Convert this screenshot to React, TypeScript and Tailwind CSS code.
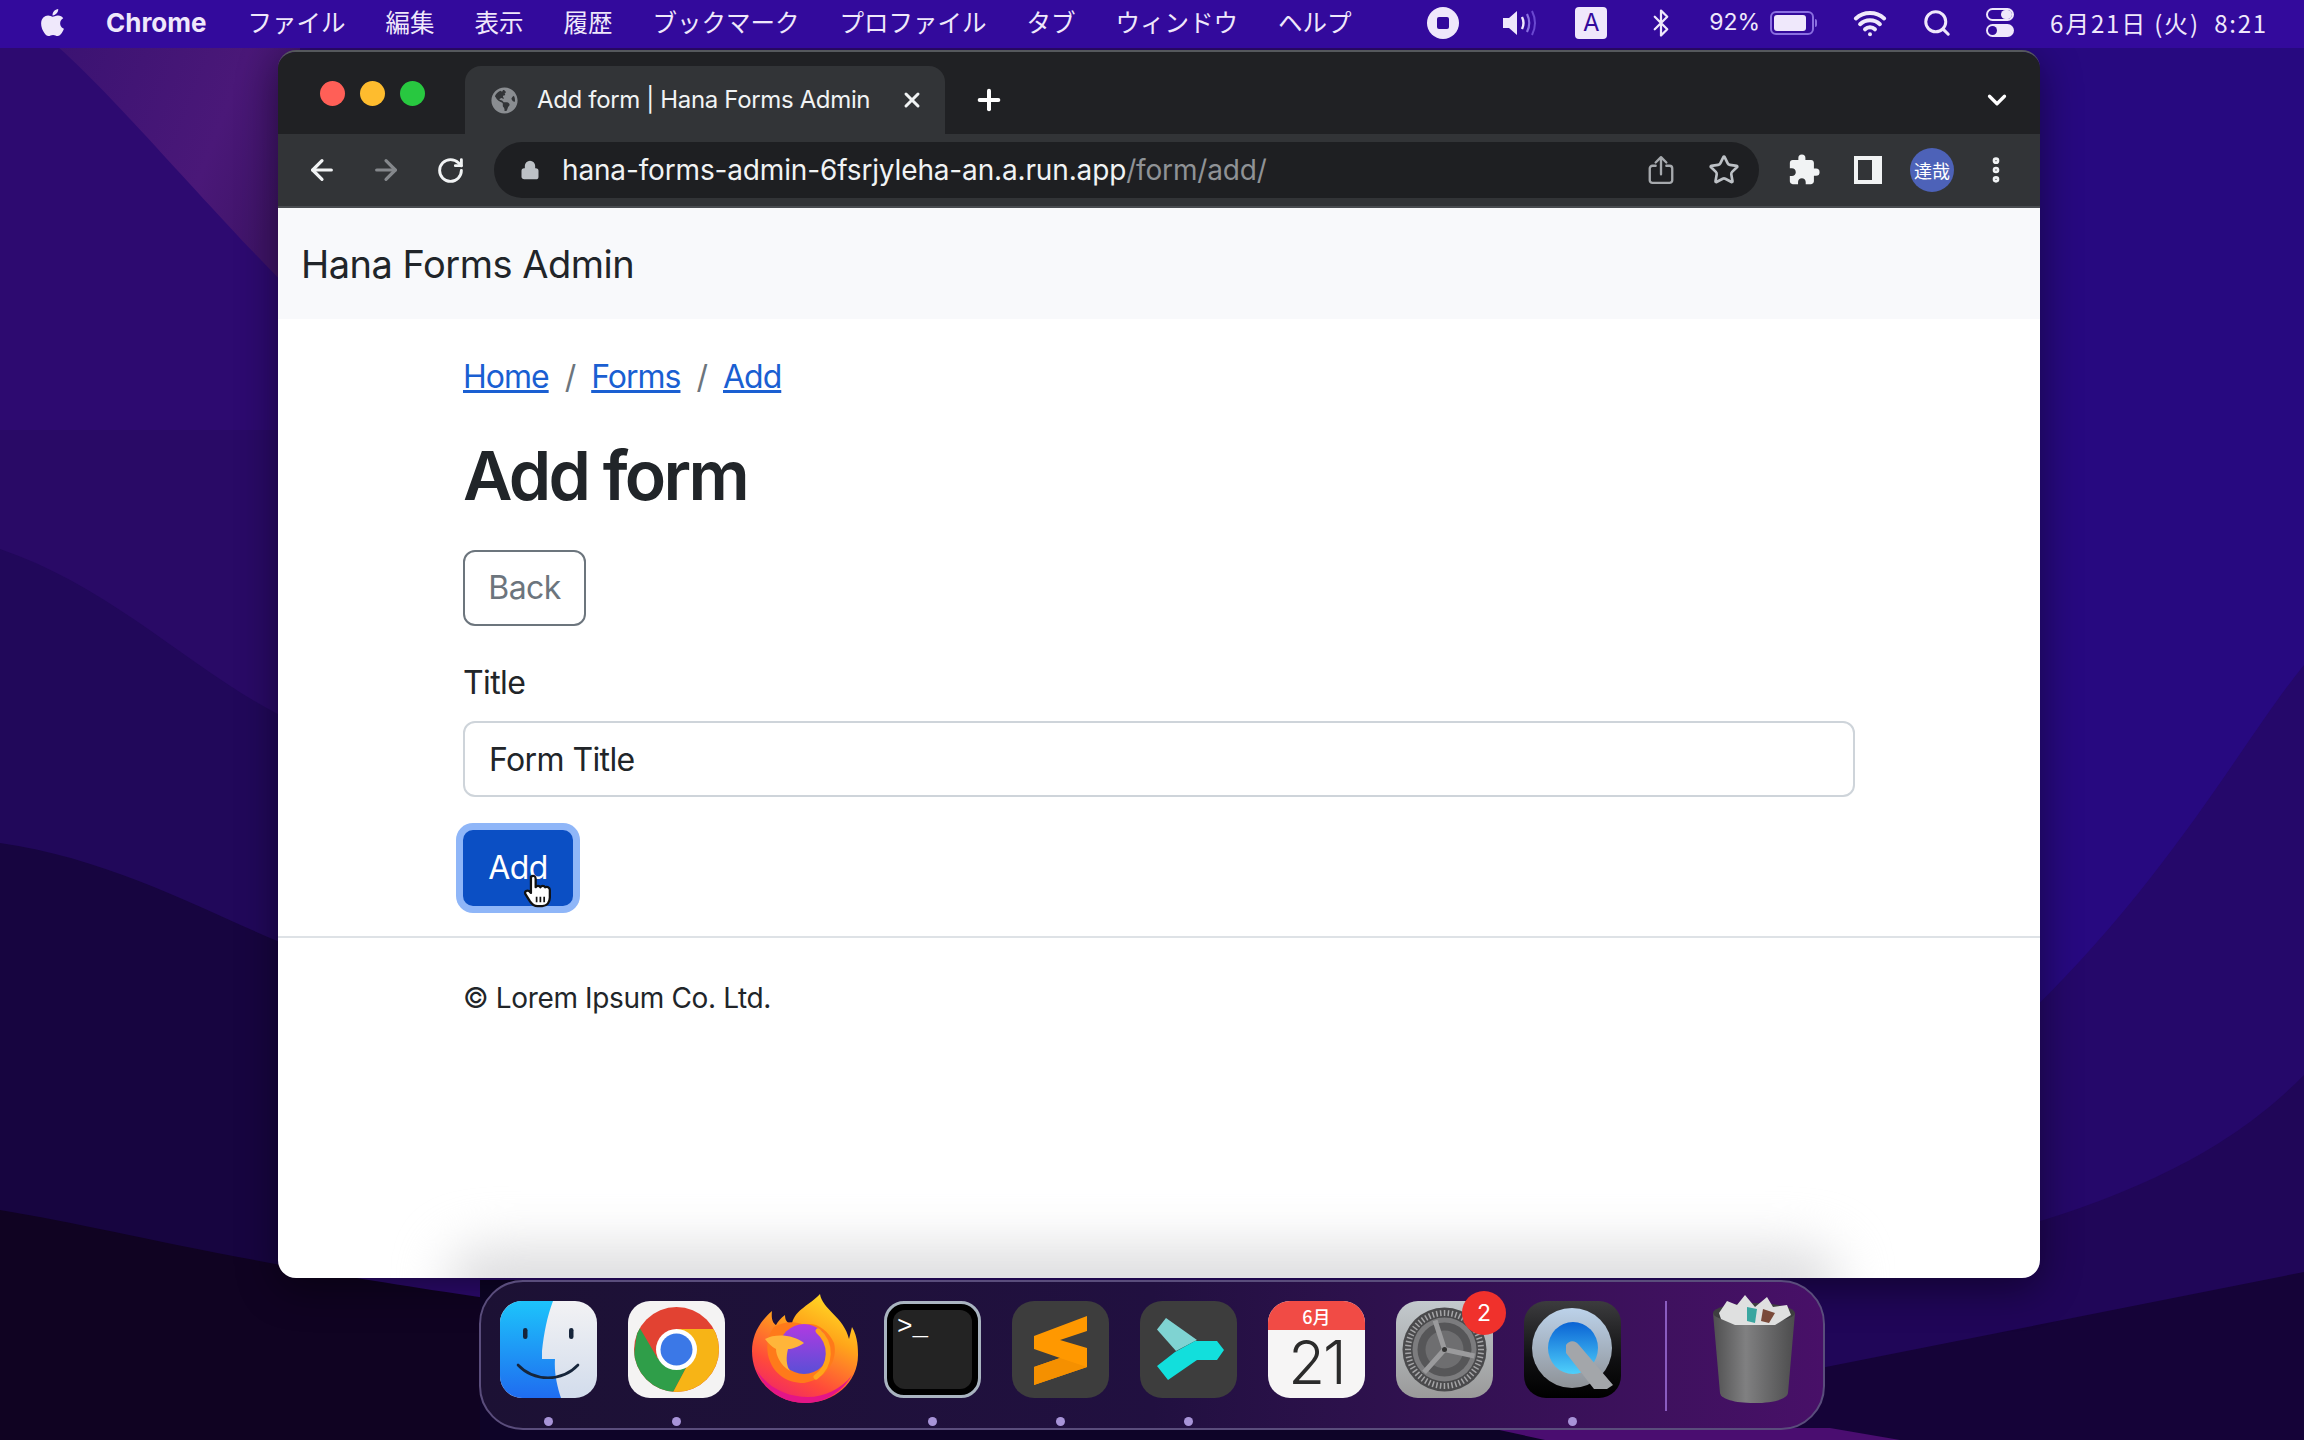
import { ArrowLeft, ArrowRight, ChevronDown, Lock, Plus, RotateCw, Search, Star, Wifi, X, Bluetooth, MoreVertical } from "lucide-react";
import { FaApple, FaGlobeAmericas } from "react-icons/fa";
import { MdExtension } from "react-icons/md";

const menus = ["ファイル", "編集", "表示", "履歴", "ブックマーク", "プロファイル", "タブ", "ウィンドウ", "ヘルプ"];

function Wallpaper() {
  return (
    <svg className="absolute inset-0 h-full w-full" viewBox="0 0 2304 1440" preserveAspectRatio="none">
      <defs>
        <linearGradient id="wpTop" x1="0" y1="0" x2="1" y2="0.4">
          <stop offset="0" stopColor="#3a1272" />
          <stop offset="0.7" stopColor="#4a1878" />
          <stop offset="1" stopColor="#3f1468" />
        </linearGradient>
      </defs>
      <rect width="2304" height="1440" fill="#2d0a70" />
      <path d="M50 40 C110 90 200 200 300 300 V40Z" fill="url(#wpTop)" />
      <path d="M0 430 H300 V1000 H0Z" fill="#290a66" />
      <path d="M0 549 C120 590 200 680 300 725 V1000 H0Z" fill="#21085a" />
      <path d="M0 843 C120 860 220 920 300 950 V1300 H0Z" fill="#170540" />
      <path d="M0 1210 C120 1230 220 1260 500 1300 V1440 H0Z" fill="#100322" />
      <rect x="1700" y="40" width="604" height="1340" fill="#270980" />
      <path d="M1700 1240 C2080 1060 2210 780 2304 665 V1400 H1700Z" fill="#25086a" />
      <path d="M1700 1290 C2080 1240 2220 1160 2304 1075 V1400 H1700Z" fill="#200658" />
      <path d="M1700 1392 L2304 1272 V1440 H1700Z" fill="#150338" />
      <path d="M480 1280 H1700 V1440 H480Z" fill="#0e0428" />
      <path d="M1490 1428 H1830 L1900 1440 H1545Z" fill="#4a0d70" />
    </svg>
  );
}

function MenuBar() {
  return (
    <div className="relative flex h-12 items-center bg-[#330a9c] pb-[3px] pl-[37px] pr-[36px] text-[24.5px] text-[#efe8fb] [font-family:'Noto_Sans_CJK_JP',sans-serif]">
      <FaApple className="h-[31px] w-[31px]" />
      <span className="ml-[38px] text-[26px] font-bold [font-family:'Inter',sans-serif]">Chrome</span>
      <div className="ml-[41px] flex gap-[40px]">
        {menus.map((m) => (
          <span key={m} className="whitespace-nowrap">{m}</span>
        ))}
      </div>
      <div className="ml-auto flex items-center">
        <div className="flex h-8 w-8 items-center justify-center rounded-full bg-[#efe8fb]">
          <div className="h-3 w-3 rounded-[2px] bg-[#330a9c]" />
        </div>
        <svg className="ml-[42px] h-8 w-[36px]" viewBox="0 0 36 32" fill="none">
          <path d="M2 11h6l8-7v24l-8-7H2z" fill="#efe8fb" />
          <path d="M21 10c2 4 2 8 0 12" stroke="#efe8fb" strokeWidth="2.4" />
          <path d="M26 7c3 6 3 12 0 18" stroke="#8a6fe0" strokeWidth="2.2" />
          <path d="M31 4c4 8 4 16 0 24" stroke="#6a48d0" strokeWidth="2" />
        </svg>
        <div className="ml-[38px] flex h-8 w-8 items-center justify-center rounded-[4px] bg-[#efe8fb] text-[24px] leading-none text-[#330a9c] [font-family:'Inter',sans-serif]">A</div>
        <Bluetooth className="ml-[39px] h-[30px] w-[30px]" strokeWidth={1.8} />
        <span className="ml-[33px] text-[23px] [font-family:'Inter',sans-serif]">92%</span>
        <div className="ml-[10px] flex items-center">
          <div className="h-[24px] w-[44px] rounded-[6px] border-2 border-[#8a6fe0] p-[2px]">
            <div className="h-full w-[88%] rounded-[3px] bg-[#efe8fb]" />
          </div>
          <div className="ml-[1px] h-2 w-[2px] rounded-r bg-[#8a6fe0]" />
        </div>
        <Wifi className="ml-[36px] h-[34px] w-[34px]" strokeWidth={2.8} />
        <Search className="ml-[35px] h-[30px] w-[30px]" strokeWidth={2.4} />
        <div className="ml-[34px] flex flex-col gap-[3px]">
          <div className="h-[13px] w-[28px] rounded-full border-2 border-[#efe8fb] pl-[13px]"><div className="h-full w-full rounded-full bg-[#efe8fb]" /></div>
          <div className="h-[13px] w-[28px] rounded-full bg-[#efe8fb] pl-[2px] pt-[2px]"><div className="h-[9px] w-[9px] rounded-full bg-[#330a9c]" /></div>
        </div>
        <span className="ml-[36px] whitespace-nowrap text-[24px] tracking-[1.8px]">6月21日 (火)&nbsp; 8:21</span>
      </div>
    </div>
  );
}

function TabStrip() {
  return (
    <div className="flex h-[82px] shrink-0 items-end bg-[#202124] pl-[42px]">
      <div className="mb-[28px] flex gap-[15px]">
        <div className="h-[25px] w-[25px] rounded-full bg-[#ff5f57]" />
        <div className="h-[25px] w-[25px] rounded-full bg-[#febc2e]" />
        <div className="h-[25px] w-[25px] rounded-full bg-[#28c840]" />
      </div>
      <div className="relative ml-[40px] flex h-[68px] w-[480px] items-center rounded-t-[16px] bg-[#323437] pl-[26px] text-[24px] tracking-[-0.35px] text-[#f1f3f4] [font-family:'Inter',sans-serif]">
        <FaGlobeAmericas className="h-[27px] w-[27px] text-[#8a8d91]" />
        <span className="ml-[19px] whitespace-nowrap">Add form | Hana Forms Admin</span>
        <X className="absolute right-[21px] h-[24px] w-[24px]" strokeWidth={3} />
      </div>
      <div className="mb-[14px] ml-[24px] flex h-10 w-10 items-center justify-center">
        <Plus className="h-[32px] w-[32px] text-white" strokeWidth={3} />
      </div>
      <div className="mb-[14px] ml-auto mr-[23px] flex h-10 w-10 items-center justify-center">
        <ChevronDown className="h-[30px] w-[30px] text-white" strokeWidth={2.6} />
      </div>
    </div>
  );
}

function ToolBar() {
  return (
    <div className="flex h-[74px] shrink-0 items-start border-b-2 border-[#494c50] bg-[#323437] pl-3 pt-2 [font-family:'Inter',sans-serif]">
      <div className="flex h-14 w-16 items-center justify-center"><ArrowLeft className="h-[32px] w-[32px] text-[#f1f3f4]" strokeWidth={2.4} /></div>
      <div className="flex h-14 w-16 items-center justify-center"><ArrowRight className="h-[32px] w-[32px] text-[#85888c]" strokeWidth={2.4} /></div>
      <div className="flex h-14 w-16 items-center justify-center"><RotateCw className="h-[29px] w-[29px] text-[#f1f3f4]" strokeWidth={2.4} /></div>
      <div className="ml-3 flex h-14 w-[1265px] items-center rounded-full bg-[#1e1f22] pl-[26px] pr-[19px] text-[28px] tracking-[-0.15px]">
        <Lock className="h-[22px] w-[20px] fill-[#bdc1c6] text-[#bdc1c6]" strokeWidth={2.4} />
        <span className="ml-[22px] whitespace-nowrap text-[#f1f3f4]">hana-forms-admin-6fsrjyleha-an.a.run.app</span>
        <span className="whitespace-nowrap text-[#8f9296]">/form/add/</span>
        <svg className="ml-auto h-[30px] w-[26px]" viewBox="0 0 24 28" fill="none" stroke="#a6a9ad" strokeWidth="2.2" strokeLinecap="round" strokeLinejoin="round">
          <path d="M7 10H4a2.5 2.5 0 0 0-2.5 2.5v11A2.5 2.5 0 0 0 4 26h16a2.5 2.5 0 0 0 2.5-2.5v-11A2.5 2.5 0 0 0 20 10h-3" />
          <path d="M12 18V2M7 7l5-5 5 5" />
        </svg>
        <Star className="ml-[34px] h-[32px] w-[32px] text-[#bdc1c6]" strokeWidth={2} />
      </div>
      <div className="ml-[13px] flex h-14 w-16 items-center justify-center"><MdExtension className="h-[34px] w-[34px] text-[#f1f3f4]" /></div>
      <div className="flex h-14 w-16 items-center justify-center">
        <div className="flex h-[28px] w-[28px] bg-[#f1f3f4] py-[4px] pl-[4px] pr-[10px]"><div className="h-full w-full bg-[#323437]" /></div>
      </div>
      <div className="flex h-14 w-16 items-center justify-center">
        <div className="flex h-[44px] w-[44px] items-center justify-center rounded-full bg-[#4d62b8] text-[18px] leading-none text-white [font-family:'Noto_Sans_CJK_JP',sans-serif]">達哉</div>
      </div>
      <div className="flex h-14 w-16 items-center justify-center"><MoreVertical className="h-[32px] w-[32px] text-[#f1f3f4]" strokeWidth={3} /></div>
    </div>
  );
}

function HandCursor() {
  return (
    <svg className="absolute left-[60px] top-[44px] h-[34px] w-[31px]" viewBox="0 0 32 36">
      <path d="M8 3c2-2 5-1 5 2v9c1-2 4-2 5 0 1-2 4-2 5 0 2-1 5 0 5 3v8c0 5-3 9-8 9h-5c-4 0-6-2-8-5l-5-8c-1-3 2-4 4-3l2 2z" fill="#fff" stroke="#111" strokeWidth="2.4" strokeLinejoin="round" />
      <path d="M14 24v6M18 24v6M22 24v6" stroke="#111" strokeWidth="1.8" />
    </svg>
  );
}

function Page() {
  return (
    <div className="relative flex-1 overflow-hidden bg-white text-[32px] tracking-[-0.6px] text-[#212529] [font-family:'Inter',sans-serif]">
      <div className="flex h-[111px] items-center bg-[#f8f9fb] pl-[23px] pt-[2px] text-[38px] tracking-[-0.5px]">Hana Forms Admin</div>
      <div className="ml-[185px] w-[1392px]">
        <div className="mt-[38px] flex h-[40px] items-center text-[32px] leading-none tracking-[-1px]">
          <a className="text-[#1a5fd2] underline">Home</a>
          <span className="mx-[16px] text-[#6c757d]">/</span>
          <a className="text-[#1a5fd2] underline">Forms</a>
          <span className="mx-[16px] text-[#6c757d]">/</span>
          <a className="text-[#1a5fd2] underline">Add</a>
        </div>
        <h1 className="mt-[33px] h-[90px] text-[68px] font-semibold leading-[90px] tracking-[-2.7px]">Add form</h1>
        <div className="mt-[30px] flex h-[76px] w-[123px] items-center justify-center rounded-[12px] border-2 border-[#6c757d] text-[#6c757d]">Back</div>
        <div className="mt-[33px] h-[48px] leading-[48px]">Title</div>
        <input readOnly value="Form Title" className="mt-[14px] block h-[76px] w-full rounded-[12px] border-2 border-[#ced4da] px-6 text-[32px] tracking-[-0.6px] text-[#212529] outline-none" />
        <div className="relative mt-[33px] flex h-[76px] w-[110px] items-center justify-center rounded-[10px] bg-[#0b4fc4] text-white shadow-[0_0_0_7px_#8fb6f8]">
          Add
          <HandCursor />
        </div>
      </div>
      <div className="mt-[30px] h-[2px] bg-[#dee2e6]" />
      <div className="ml-[185px] mt-[40px] text-[28px] leading-[40px] tracking-[-0.35px]">© Lorem Ipsum Co. Ltd.</div>
      <div className="absolute bottom-[-40px] left-[170px] h-[70px] w-[1390px] rounded-full bg-[#dcdcde] blur-[26px]" />
    </div>
  );
}

function Finder() {
  return (
    <svg viewBox="0 0 97 97" className="h-full w-full">
      <defs>
        <linearGradient id="fb" x1="0" y1="0" x2="0" y2="1"><stop offset="0" stopColor="#1dc4fb" /><stop offset="1" stopColor="#1f6cf0" /></linearGradient>
        <linearGradient id="fg" x1="0" y1="0" x2="0" y2="1"><stop offset="0" stopColor="#f2f2f4" /><stop offset="1" stopColor="#d2dcec" /></linearGradient>
      </defs>
      <rect width="97" height="97" rx="22" fill="url(#fg)" />
      <path d="M22 0h31c-6 16-9 32-11 50v8h13c-1 13 2 27 6 39H22C10 97 0 87 0 75V22C0 10 10 0 22 0z" fill="url(#fb)" />
      <path d="M18 64c16 17 44 17 60 0" fill="none" stroke="#16253b" strokeWidth="2.6" strokeLinecap="round" />
      <rect x="23" y="27" width="4.5" height="11" rx="2.2" fill="#16253b" />
      <rect x="69" y="27" width="4.5" height="11" rx="2.2" fill="#16253b" />
    </svg>
  );
}

function Chrome() {
  return (
    <svg viewBox="0 0 97 97" className="h-full w-full">
      <defs>
        <clipPath id="chromeClip"><circle cx="48.5" cy="48.5" r="42.5" /></clipPath>
      </defs>
      <rect width="97" height="97" rx="22" fill="#f4f3f3" />
      <g clipPath="url(#chromeClip)">
        <rect width="97" height="97" fill="#e24232" />
        <path d="M30 58 L10 24 L0 97 H42 L58 67Z" fill="#2f9e49" />
        <path d="M48.5 28 H97 V97 H42 L58 67Z" fill="#f7b416" />
      </g>
      <circle cx="48.5" cy="48.5" r="20.5" fill="#fff" />
      <circle cx="48.5" cy="48.5" r="16" fill="#3b78e7" />
    </svg>
  );
}

function Firefox() {
  return (
    <svg viewBox="0 0 106 110" className="h-full w-full">
      <defs>
        <linearGradient id="ff1" x1="0.8" y1="0" x2="0.3" y2="1"><stop offset="0" stopColor="#ffe226" /><stop offset="0.35" stopColor="#ffa51a" /><stop offset="0.75" stopColor="#ff4a3a" /><stop offset="1" stopColor="#f0246a" /></linearGradient>
        <linearGradient id="ff2" x1="0.5" y1="0" x2="0.5" y2="1"><stop offset="0" stopColor="#b03ae2" /><stop offset="1" stopColor="#5a4fd6" /></linearGradient>
      </defs>
      <path d="M68 1C70 16 92 24 97 46L100 34C106 44 106 56 106 62C106 90 82 110 53 110C24 110 0 88 0 58C0 44 6 30 20 18C19 26 21 30 24 32C26 28 29 25 33 22C33 28 36 31 40 30C44 16 58 12 68 1Z" fill="url(#ff1)" />
      <path d="M4 76C16 96 36 104 56 104C72 104 90 96 100 82C90 100 72 110 53 110C30 110 12 96 4 76Z" fill="#e31587" />
      <path d="M22 34C32 28 44 28 52 32C62 28 76 36 82 50C86 66 76 86 52 90C34 90 20 80 16 62C14 50 16 42 22 34Z" fill="#ff7a1a" />
      <circle cx="52" cy="56" r="25" fill="url(#ff2)" />
      <path d="M66 38C80 50 80 72 64 84" fill="none" stroke="#ffa51a" strokeWidth="5" strokeLinecap="round" />
      <path d="M13 46C24 40 42 42 52 50C46 54 40 56 36 56C34 64 34 72 38 78C28 72 24 62 24 56C20 54 16 50 13 46Z" fill="#ffb53a" />
    </svg>
  );
}

function Terminal() {
  return (
    <div className="flex h-full w-full rounded-[20px] border-[3px] border-[#a9b4c0] bg-black p-[6px] [font-family:'Liberation_Mono',monospace]">
      <div className="h-full w-full rounded-[12px] bg-[#232323] pl-[4px] pt-[2px] text-[26px] leading-[30px] text-white">&gt;_</div>
    </div>
  );
}

function Sublime() {
  return (
    <svg viewBox="0 0 97 97" className="h-full w-full">
      <rect width="97" height="97" rx="22" fill="#3d3d3d" />
      <path d="M75 15V30L48 39L75 47V66L22 84V66L48 57L22 48V35Z" fill="#ff9800" />
      <path d="M48 57L75 66L22 84V66Z" fill="#f59000" />
    </svg>
  );
}

function Sidekick() {
  return (
    <svg viewBox="0 0 97 97" className="h-full w-full">
      <rect width="97" height="97" rx="22" fill="#3d3d3d" />
      <path d="M26 17L17 28.5L36 50L57 39Z" fill="#7fd3d2" />
      <path d="M17 65L35 51L55 40H77L84 49L77 59H57L28 79Z" fill="#12dfdc" />
    </svg>
  );
}

function Calendar() {
  return (
    <div className="flex h-full w-full flex-col rounded-[22px] bg-[#f6f5f5] [font-family:'Noto_Sans_CJK_JP',sans-serif]">
      <div className="flex h-[29px] items-center justify-center rounded-t-[22px] bg-[#f14b45] text-[18px] font-medium leading-none text-white">6月</div>
      <div className="flex flex-1 items-center justify-center pb-[4px] text-[60px] font-light leading-none tracking-[-2px] text-[#2b2b2b] [font-family:'Inter',sans-serif]">21</div>
    </div>
  );
}

function Settings() {
  const ticks = Array.from({ length: 60 }, (_, i) => i * 6);
  return (
    <svg viewBox="0 0 97 97" className="h-full w-full">
      <defs>
        <linearGradient id="sg" x1="0" y1="0" x2="0" y2="1"><stop offset="0" stopColor="#c3c9cd" /><stop offset="1" stopColor="#9a9a9a" /></linearGradient>
      </defs>
      <rect width="97" height="97" rx="22" fill="url(#sg)" />
      <circle cx="48.5" cy="48.5" r="42" fill="#4a4a4c" />
      {ticks.map((a) => (
        <rect key={a} x="47.8" y="9" width="1.5" height="6" fill="#a5a5a7" transform={`rotate(${a} 48.5 48.5)`} />
      ))}
      <circle cx="48.5" cy="48.5" r="32" fill="#7c7c7e" />
      <circle cx="48.5" cy="48.5" r="27" fill="#565658" />
      <circle cx="48.5" cy="48.5" r="19" fill="#6e6e70" />
      <g stroke="#9a9a9c" strokeWidth="5" transform="rotate(-18 48.5 48.5)">
        <path d="M48.5 48.5V18M48.5 48.5L22 64M48.5 48.5L75 64" />
      </g>
      <circle cx="48.5" cy="48.5" r="2.5" fill="#333" />
    </svg>
  );
}

function QuickTime() {
  return (
    <svg viewBox="0 0 97 97" className="h-full w-full">
      <defs>
        <linearGradient id="qb" x1="0" y1="0" x2="0" y2="1"><stop offset="0" stopColor="#3c3c3e" /><stop offset="0.6" stopColor="#101012" /><stop offset="1" stopColor="#000" /></linearGradient>
        <linearGradient id="qr" x1="0" y1="0" x2="0" y2="1"><stop offset="0" stopColor="#bcd2ea" /><stop offset="1" stopColor="#8e9297" /></linearGradient>
        <linearGradient id="qc" x1="0" y1="0" x2="0" y2="1"><stop offset="0" stopColor="#0a63d4" /><stop offset="1" stopColor="#4fd0fb" /></linearGradient>
      </defs>
      <rect width="97" height="97" rx="22" fill="url(#qb)" />
      <ellipse cx="48" cy="47" rx="40" ry="40" fill="url(#qr)" />
      <ellipse cx="49" cy="47" rx="25" ry="26" fill="url(#qc)" />
      <path d="M42 44c4-6 10-4 13 0l34 40-6 4H70L42 52z" fill="#a3a6aa" />
    </svg>
  );
}

function Trash() {
  return (
    <svg viewBox="0 0 86 110" className="h-full w-full">
      <defs>
        <linearGradient id="tg" x1="0" y1="0" x2="1" y2="0"><stop offset="0" stopColor="#4f4f50" /><stop offset="0.4" stopColor="#808081" /><stop offset="1" stopColor="#4c4c4d" /></linearGradient>
      </defs>
      <path d="M2 20l7 80c1 6 14 10 34 10s33-4 34-10l7-80z" fill="url(#tg)" />
      <ellipse cx="43" cy="20" rx="41" ry="10" fill="#3e3e40" />
      <path d="M8 20l8-12 10 4 8-10 10 12 12-10 6 10 14-2 4 10-16 10-40 0-14-6z" fill="#dfe0e0" />
      <path d="M36 14l10 2-2 14-8-2z" fill="#3aa6a0" />
      <path d="M52 16l12 4-6 10-8-2z" fill="#7a4a3a" />
    </svg>
  );
}

type DockItem = { key: string; running?: boolean; tall?: boolean; node: React.ReactNode };

const dockItems: DockItem[] = [
  { key: "finder", running: true, node: <Finder /> },
  { key: "chrome", running: true, node: <Chrome /> },
  { key: "firefox", node: <Firefox />, tall: true },
  { key: "terminal", running: true, node: <Terminal /> },
  { key: "sublime", running: true, node: <Sublime /> },
  { key: "sidekick", running: true, node: <Sidekick /> },
  { key: "calendar", node: <Calendar /> },
  { key: "settings", node: <Settings /> },
  { key: "quicktime", running: true, node: <QuickTime /> },
];

function Dock() {
  return (
    <div className="relative ml-[479px] mt-[2px] flex h-[150px] w-[1346px] rounded-[44px] border-2 border-[#5a4d7c] bg-gradient-to-r from-[#1c1134] via-[#211040] to-[#481068] pl-[19px] pt-[19px]">
      <div className="flex gap-[31px]">
        {dockItems.map((item) => (
          <div key={item.key} className="relative h-[97px] w-[97px]">
            {item.tall ? <div className="absolute -left-[4px] -top-[8px] h-[110px] w-[106px]">{item.node}</div> : item.node}
            {item.key === "settings" && (
              <div className="absolute -right-[13px] -top-[10px] flex h-[44px] w-[44px] items-center justify-center rounded-full bg-[#f0312c] text-[23px] text-white [font-family:'Inter',sans-serif]">2</div>
            )}
            {item.running && <div className="absolute left-[44px] top-[116px] h-[9px] w-[9px] rounded-full bg-[#a894d8]" />}
          </div>
        ))}
      </div>
      <div className="ml-[44px] h-[110px] w-[2px] bg-[#8a5cc0]" />
      <div className="-mt-[8px] ml-[44px] h-[110px] w-[86px]"><Trash /></div>
    </div>
  );
}

export default function App() {
  return (
    <div className="relative h-[1440px] w-[2304px] overflow-hidden">
      <Wallpaper />
      <div className="relative">
        <MenuBar />
        <div className="ml-[278px] mt-[2px] flex h-[1228px] w-[1762px] flex-col overflow-hidden rounded-[18px] border-t-2 border-[#55585c] shadow-[0_10px_40px_rgba(0,0,0,0.45)]">
          <TabStrip />
          <ToolBar />
          <Page />
        </div>
        <Dock />
      </div>
    </div>
  );
}
